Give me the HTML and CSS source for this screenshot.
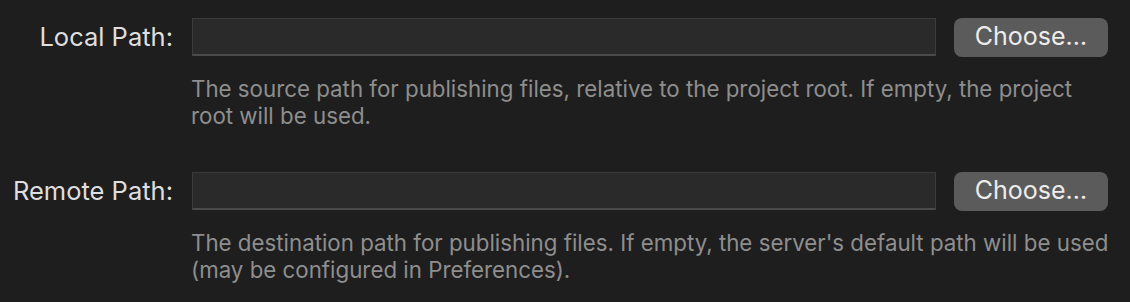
FILE: index.html
```html
<!DOCTYPE html>
<html>
<head>
<meta charset="utf-8">
<link rel="stylesheet" href="styles.css">
</head>
<body>
<div class="form">
  <div class="row">
    <label class="label">Local Path:</label>
    <div class="field"></div>
    <button class="btn">Choose…</button>
  </div>
  <p class="help">The source path for publishing files, relative to the project root. If empty, the project root will be used.</p>
  <div class="row row2">
    <label class="label">Remote Path:</label>
    <div class="field"></div>
    <button class="btn">Choose…</button>
  </div>
  <p class="help">The destination path for publishing files. If empty, the server's default path will be used (may be configured in Preferences).</p>
</div>
</body>
</html>
```
FILE: styles.css
```css
html, body {
  margin: 0;
  padding: 0;
  background: #1e1e1e;
  width: 1130px;
  height: 302px;
  overflow: hidden;
  font-family: Inter, "Noto Sans", sans-serif;
}
.form {
  padding-top: 18px;
}
.row {
  display: flex;
  align-items: center;
  height: 39px;
}
.row2 {
  margin-top: 43px;
}
.label {
  width: 192px;
  text-align: right;
  color: #dedede;
  font-size: 25.5px;
  padding-right: 19px;
  padding-bottom: 2px;
  box-sizing: border-box;
  flex: none;
}
.field {
  width: 744px;
  height: 38px;
  box-sizing: border-box;
  background: #2a2a2a;
  border: 1px solid #3c3c3c;
  border-bottom: 2px solid #4a4a4a;
  flex: none;
  align-self: flex-start;
}
.btn {
  margin-left: 18px;
  width: 154px;
  height: 39px;
  border: none;
  border-radius: 8px;
  background: #5b5b5b;
  color: #ececec;
  font-family: inherit;
  font-size: 25px;
  padding: 0 0 3px;
  flex: none;
}
.help {
  margin: 18px 0 0 191px;
  width: 922px;
  color: #8e8e8e;
  font-size: 22.3px;
  line-height: 27px;
}
```
